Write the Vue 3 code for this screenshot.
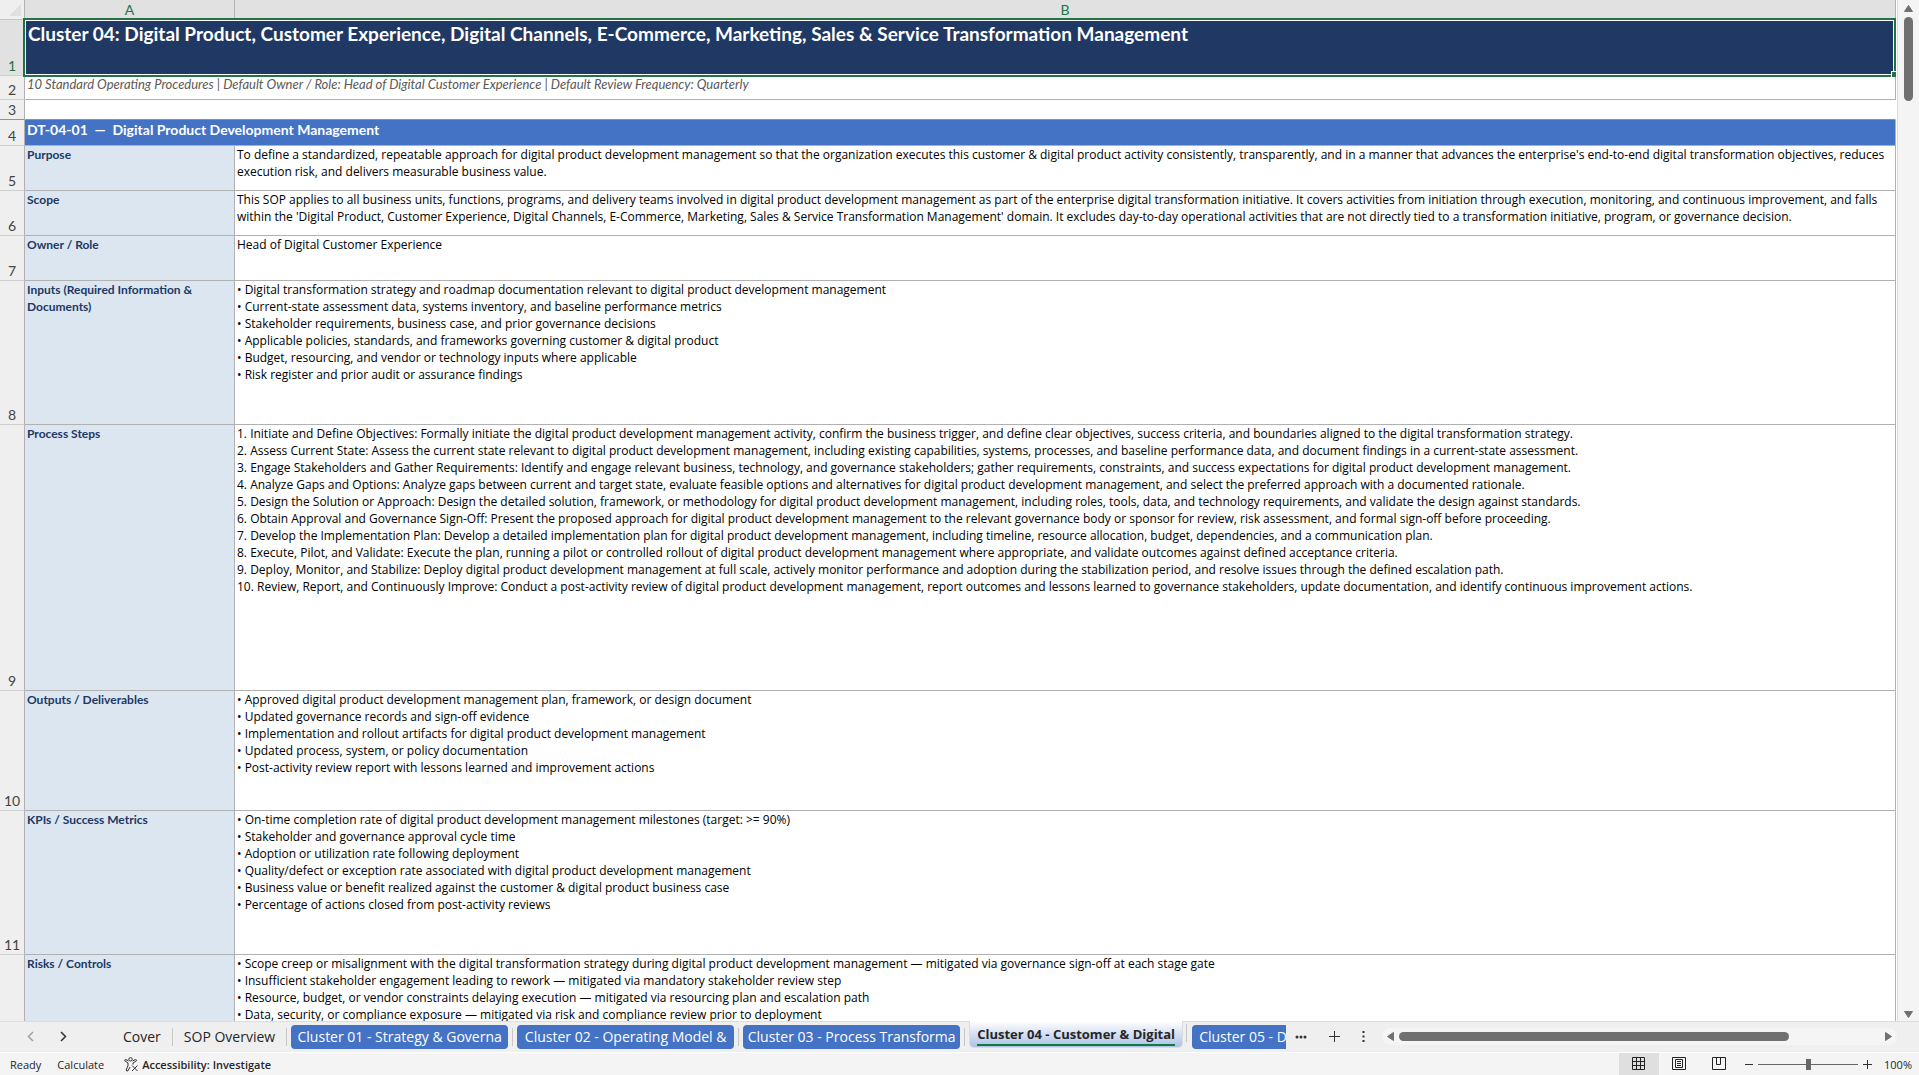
<script setup>
import { ref } from 'vue'

const rows = [
  { n: '5', size: 'h45', label: ['Purpose'], lines: [
    "To define a standardized, repeatable approach for digital product development management so that the organization executes this customer & digital product activity consistently, transparently, and in a manner that advances the enterprise's end-to-end digital transformation objectives, reduces",
    'execution risk, and delivers measurable business value.' ] },
  { n: '6', size: 'h45', label: ['Scope'], lines: [
    'This SOP applies to all business units, functions, programs, and delivery teams involved in digital product development management as part of the enterprise digital transformation initiative. It covers activities from initiation through execution, monitoring, and continuous improvement, and falls',
    "within the 'Digital Product, Customer Experience, Digital Channels, E-Commerce, Marketing, Sales & Service Transformation Management' domain. It excludes day-to-day operational activities that are not directly tied to a transformation initiative, program, or governance decision." ] },
  { n: '7', size: 'h45', label: ['Owner / Role'], lines: ['Head of Digital Customer Experience'] },
  { n: '8', size: 'h144', label: ['Inputs (Required Information &', 'Documents)'], lines: [
    '• Digital transformation strategy and roadmap documentation relevant to digital product development management',
    '• Current-state assessment data, systems inventory, and baseline performance metrics',
    '• Stakeholder requirements, business case, and prior governance decisions',
    '• Applicable policies, standards, and frameworks governing customer & digital product',
    '• Budget, resourcing, and vendor or technology inputs where applicable',
    '• Risk register and prior audit or assurance findings' ] },
  { n: '9', size: 'h266', label: ['Process Steps'], lines: [
    '1. Initiate and Define Objectives: Formally initiate the digital product development management activity, confirm the business trigger, and define clear objectives, success criteria, and boundaries aligned to the digital transformation strategy.',
    '2. Assess Current State: Assess the current state relevant to digital product development management, including existing capabilities, systems, processes, and baseline performance data, and document findings in a current-state assessment.',
    '3. Engage Stakeholders and Gather Requirements: Identify and engage relevant business, technology, and governance stakeholders; gather requirements, constraints, and success expectations for digital product development management.',
    '4. Analyze Gaps and Options: Analyze gaps between current and target state, evaluate feasible options and alternatives for digital product development management, and select the preferred approach with a documented rationale.',
    '5. Design the Solution or Approach: Design the detailed solution, framework, or methodology for digital product development management, including roles, tools, data, and technology requirements, and validate the design against standards.',
    '6. Obtain Approval and Governance Sign-Off: Present the proposed approach for digital product development management to the relevant governance body or sponsor for review, risk assessment, and formal sign-off before proceeding.',
    '7. Develop the Implementation Plan: Develop a detailed implementation plan for digital product development management, including timeline, resource allocation, budget, dependencies, and a communication plan.',
    '8. Execute, Pilot, and Validate: Execute the plan, running a pilot or controlled rollout of digital product development management where appropriate, and validate outcomes against defined acceptance criteria.',
    '9. Deploy, Monitor, and Stabilize: Deploy digital product development management at full scale, actively monitor performance and adoption during the stabilization period, and resolve issues through the defined escalation path.',
    '10. Review, Report, and Continuously Improve: Conduct a post-activity review of digital product development management, report outcomes and lessons learned to governance stakeholders, update documentation, and identify continuous improvement actions.' ] },
  { n: '10', size: 'h120', label: ['Outputs / Deliverables'], lines: [
    '• Approved digital product development management plan, framework, or design document',
    '• Updated governance records and sign-off evidence',
    '• Implementation and rollout artifacts for digital product development management',
    '• Updated process, system, or policy documentation',
    '• Post-activity review report with lessons learned and improvement actions' ] },
  { n: '11', size: 'h144', label: ['KPIs / Success Metrics'], lines: [
    '• On-time completion rate of digital product development management milestones (target: >= 90%)',
    '• Stakeholder and governance approval cycle time',
    '• Adoption or utilization rate following deployment',
    '• Quality/defect or exception rate associated with digital product development management',
    '• Business value or benefit realized against the customer & digital product business case',
    '• Percentage of actions closed from post-activity reviews' ] },
  { n: '', size: 'h144', label: ['Risks / Controls'], lines: [
    '• Scope creep or misalignment with the digital transformation strategy during digital product development management — mitigated via governance sign-off at each stage gate',
    '• Insufficient stakeholder engagement leading to rework — mitigated via mandatory stakeholder review step',
    '• Resource, budget, or vendor constraints delaying execution — mitigated via resourcing plan and escalation path',
    '• Data, security, or compliance exposure — mitigated via risk and compliance review prior to deployment' ] },
]

const tabs = [
  { text: 'Cover', kind: 'plain' },
  { text: 'SOP Overview', kind: 'plain' },
  { text: 'Cluster 01 - Strategy & Governa', kind: 'blue' },
  { text: 'Cluster 02 - Operating Model &', kind: 'blue' },
  { text: 'Cluster 03 - Process Transforma', kind: 'blue' },
  { text: 'Cluster 04 - Customer & Digital', kind: 'active' },
  { text: 'Cluster 05 - D', kind: 'blue cut' },
]

const zoom = ref(100)
</script>

<template>
  <div class="app">
    <main class="work">
      <div class="sheet">
        <table class="grid">
          <colgroup><col class="c-num"><col class="c-a"><col></colgroup>
          <thead>
            <tr>
              <th class="corner"><svg width="12" height="12" viewBox="0 0 12 12"><path d="M12 0V12H0Z" fill="#dfdfdf" /></svg></th>
              <th class="letter" scope="col">A</th>
              <th class="letter" scope="col">B</th>
            </tr>
          </thead>
          <tbody>
            <tr class="h56">
              <th class="num on" scope="row">1</th>
              <td colspan="2" class="title">Cluster 04: Digital Product, Customer Experience, Digital Channels, E-Commerce, Marketing, Sales &amp; Service Transformation Management<span class="selection"><i class="handle"></i></span></td>
            </tr>
            <tr class="h24">
              <th class="num" scope="row">2</th>
              <td colspan="2" class="subtitle">10 Standard Operating Procedures | Default Owner / Role: Head of Digital Customer Experience | Default Review Frequency: Quarterly</td>
            </tr>
            <tr class="h20">
              <th class="num frozen" scope="row">3</th>
              <td colspan="2" class="blank frozen"></td>
            </tr>
            <tr class="h26">
              <th class="num" scope="row">4</th>
              <td colspan="2" class="section">DT-04-01 &nbsp;—&nbsp; Digital Product Development Management</td>
            </tr>
            <tr v-for="r in rows" :key="r.n" :class="r.size">
              <th class="num" scope="row">{{ r.n }}</th>
              <td class="label"><div v-for="l in r.label" :key="l">{{ l }}</div></td>
              <td class="text"><div v-for="l in r.lines" :key="l">{{ l }}</div></td>
            </tr>
          </tbody>
        </table>
      </div>
      <div class="vscroll">
        <svg width="9" height="7" viewBox="0 0 9 7"><path d="M4.5 0.5L8.500 6.500H0.500Z" fill="#707070" stroke="#707070" stroke-linejoin="round" /></svg>
        <div class="vthumb"></div>
        <svg class="down" width="9" height="7" viewBox="0 0 9 7"><path d="M4.500 6.500L0.500 0.500H8.500Z" fill="#707070" stroke="#707070" stroke-linejoin="round" /></svg>
      </div>
    </main>

    <nav class="tabbar">
      <div class="arrows">
        <button class="icon" aria-label="Previous sheets"><svg width="7" height="11" viewBox="0 0 7 11"><path d="M6 1L1.500 5.500L6 10" fill="none" stroke="#a0a0a0" stroke-width="1.500" /></svg></button>
        <button class="icon" aria-label="Next sheets"><svg width="7" height="11" viewBox="0 0 7 11"><path d="M1 1L5.500 5.500L1 10" fill="none" stroke="#333" stroke-width="1.500" /></svg></button>
      </div>
      <div class="tabs">
        <button v-for="t in tabs" :key="t.text" class="tab" :class="t.kind"><span>{{ t.text }}</span></button>
      </div>
      <div class="tools">
        <button class="icon" aria-label="More sheets"><svg width="12" height="4" viewBox="0 0 12 4"><g fill="#333"><circle cx="2" cy="2" r="1.500" /><circle cx="6" cy="2" r="1.500" /><circle cx="10" cy="2" r="1.500" /></g></svg></button>
        <button class="icon" aria-label="New sheet"><svg width="11" height="11" viewBox="0 0 11 11"><path d="M5.500 0V11M0 5.500H11" stroke="#333" /></svg></button>
        <button class="icon" aria-label="Resize scroll bar"><svg width="3" height="11" viewBox="0 0 3 11"><path d="M0.500 0h2v2h-2zM0.500 4.500h2v2h-2zM0.500 9h2v2h-2z" fill="#333" /></svg></button>
      </div>
      <div class="hscroll">
        <svg width="7" height="9" viewBox="0 0 7 9"><path d="M0.500 4.500L6.500 0.500V8.500Z" fill="#707070" stroke="#707070" stroke-linejoin="round" /></svg>
        <div class="htrack"><div class="hthumb"></div></div>
        <svg width="7" height="9" viewBox="0 0 7 9"><path d="M6.500 4.500L0.500 0.500V8.500Z" fill="#707070" stroke="#707070" stroke-linejoin="round" /></svg>
      </div>
    </nav>

    <footer class="status">
      <span class="ready">Ready</span>
      <span class="calc">Calculate</span>
      <button class="access">
        <svg width="15" height="15" viewBox="0 0 15 15" fill="none" stroke="#333"><circle cx="6.500" cy="2.300" r="1.700" /><path d="M4.500 4L1.800 2.500Q0.500 2.500 0.700 3.800L4 6V8.500L2.200 13Q2.500 14.600 3.900 13.900L6 10M8.500 4L11.500 2.500Q12.800 2.600 12.400 3.800L9 6V7.500M8 8.500L13.500 14M13.500 8.500L8 14" /></svg>
        <span>Accessibility: Investigate</span>
      </button>
      <div class="right">
        <button class="view chosen" aria-label="Normal view"><svg width="14" height="14" viewBox="0 0 14 14" fill="none" stroke="#222"><path d="M0.500 0.500H12.500V12.500H0.500ZM4.500 0.500V12.500M8.500 0.500V12.500M0.500 4.500H12.500M0.500 8.500H12.500" /></svg></button>
        <button class="view" aria-label="Page layout"><svg width="14" height="14" viewBox="0 0 14 14" fill="none" stroke="#222"><path d="M0.500 0.500H13.500V12.500H0.500ZM3.500 2.500H10.500V10.500H3.500ZM5 4.500H9M5 6.500H9M5 8.500H9" /></svg></button>
        <button class="view" aria-label="Page break preview"><svg width="14" height="14" viewBox="0 0 14 14" fill="none" stroke="#222"><path d="M0.500 0.500H13.500V12.500H0.500ZM4.500 0.500V7.500H8.500V0.500" /></svg></button>
        <button class="icon step" aria-label="Zoom out"><svg width="8" height="9" viewBox="0 0 8 9"><path d="M0 4.500H8" stroke="#333" /></svg></button>
        <input v-model="zoom" class="slider" type="range" min="0" max="200" aria-label="Zoom">
        <button class="icon step" aria-label="Zoom in"><svg width="9" height="9" viewBox="0 0 9 9"><path d="M4.500 0V9M0 4.500H9" stroke="#333" /></svg></button>
        <span class="pct">{{ zoom }}%</span>
      </div>
    </footer>
  </div>
</template>

<style>
body { margin: 0; overflow: hidden; }
</style>

<style scoped>
.app { display: flex; flex-direction: column; height: 100vh; background: #efefef; font-family: "Open Sans", "Noto Sans", sans-serif; color: #262626; overflow: hidden; }
button { border: 0; padding: 0; background: none; color: inherit; font: inherit; display: flex; align-items: center; justify-content: center; }
svg { display: block; flex: none; }

.work { flex: 1; min-height: 0; display: flex; }
.sheet { flex: 1; min-width: 0; overflow: hidden; background: #fff; border-right: 1px solid #dcdcdc; padding-right: 1px; font-family: Lato, "Open Sans", sans-serif; }
.grid { width: 100%; table-layout: fixed; border-collapse: separate; border-spacing: 0; }
.grid th, .grid td { box-sizing: border-box; padding: 0; text-align: left; vertical-align: top; font-weight: 400; border-bottom: 1px solid #b1b1b1; border-right: 1px solid #b1b1b1; white-space: nowrap; }
.c-num { width: 25px; }
.c-a { width: 210px; }
.h20 { height: 20px; }
.h24 { height: 24px; }
.h26 { height: 26px; }
.h45 { height: 45px; }
.h56 { height: 56px; }
.h120 { height: 120px; }
.h144 { height: 144px; }
.h266 { height: 266px; }

.grid .corner { height: 20px; background: #efefef; border-bottom-color: #c4c4c4; }
.corner svg { margin: 4px 0 0 9px; }
.grid .letter { height: 20px; background: #e1e1e1; color: #217346; font-size: 14px; line-height: 19px; text-align: center; border-right-color: #b4b4b4; }
.grid .num { background: #efefef; color: #444; font-size: 14px; line-height: 17px; padding-bottom: 1px; text-align: center; vertical-align: bottom; border-bottom-color: #d0d0d0; }
.grid .num.on { background: #e1e1e1; color: #217346; }
.grid .frozen { border-bottom-color: #919191; }

.grid .title { position: relative; background: #203864; color: #fff; font-size: 19px; font-weight: 700; line-height: 22px; padding: 3px; }
.selection { position: absolute; inset: -2px -1px -2px -2px; border: 2px solid #217346; box-shadow: inset 0 0 0 1px #fff; }
.handle { position: absolute; right: -2px; bottom: -2px; width: 4px; height: 5px; background: #217346; border-top: 1px solid #fff; border-left: 1px solid #fff; }
.grid .subtitle { color: #595959; font-size: 13px; font-style: italic; line-height: 17px; padding: 0 2px; }
.grid .blank { border-right-color: transparent; }
.grid .section { background: #4472c4; color: #fff; font-size: 14px; font-weight: 700; line-height: 20px; padding: 0 2px; }
.grid .label { background: #dce6f1; color: #203864; font-size: 12px; font-weight: 700; line-height: 17px; padding: 0 2px; }
.grid .text { color: #000; font-family: "Open Sans", sans-serif; font-size: 12px; line-height: 17px; padding: 0 2px; overflow: hidden; }

.vscroll { width: 21px; display: flex; flex-direction: column; align-items: center; background: #f4f4f4; box-sizing: border-box; padding: 5px 0 3px; }
.vthumb { width: 9px; height: 84px; margin-top: 5px; border-radius: 5px; background: #707070; }
.down { margin-top: auto; }

.tabbar { height: 32px; box-sizing: border-box; display: flex; border-bottom: 1px solid #fff; box-shadow: inset 0 1px #dcdcdc; }
.arrows { width: 116px; display: flex; align-items: center; gap: 26px; padding-left: 27px; box-sizing: border-box; flex: none; }
.tabs { flex: none; width: 1170px; display: flex; overflow: hidden; }
.tab { position: relative; flex: none; height: 24px; margin: 4px 9px 0 0; font-size: 14px; line-height: 24px; white-space: nowrap; }
.tab::after { content: ""; position: absolute; right: -5px; top: 3px; width: 1px; height: 18px; background: #c8c8c8; }
.plain { padding: 0 7px; }
.blue { min-width: 217px; background: #4472c4; color: #fff; border-radius: 4px; }
.cut { justify-content: flex-start; padding-left: 7px; }
.active { height: 27px; min-width: 214px; box-sizing: border-box; margin-top: 0; align-items: flex-start; font-size: 13px; font-weight: 700; border: 1px solid #dcdcdc; border-top: 0; border-radius: 0 0 5px 5px; background: linear-gradient(#fff, #adc1e8); padding: 0 6px; }
.active span { border-bottom: 2px solid #107c41; line-height: 20px; padding-top: 3px; }
.tools { display: flex; align-items: center; gap: 22px; padding-left: 9px; width: 96px; box-sizing: border-box; flex: none; }
.hscroll { flex: 1; height: 17px; margin: 7px 22px 0 0; padding: 0 5px; display: flex; align-items: center; gap: 5px; border-radius: 9px; background: #f5f5f5; box-sizing: border-box; }
.htrack { flex: 1; }
.hthumb { width: 81%; height: 9px; border-radius: 5px; background: #707070; }

.status { height: 22px; display: flex; align-items: center; background: #f4f4f4; font-size: 11px; padding-right: 7px; }
.ready { margin-left: 10px; }
.calc { margin-left: 16px; }
.access { margin-left: 20px; gap: 3px; font-weight: 600; }
.right { margin-left: auto; display: flex; align-items: center; height: 100%; }
.view { width: 40px; height: 100%; }
.chosen { background: #dfdfdf; }
.step { width: 9px; }
.view + .step { margin-left: 5px; }
.slider { appearance: none; width: 100px; height: 12px; margin: 0 5px; background: linear-gradient(#666, #666) center / 100% 1px no-repeat; }
.slider::-webkit-slider-thumb { appearance: none; width: 5px; height: 11px; background: #666; }
.pct { margin-left: 12px; }
</style>
